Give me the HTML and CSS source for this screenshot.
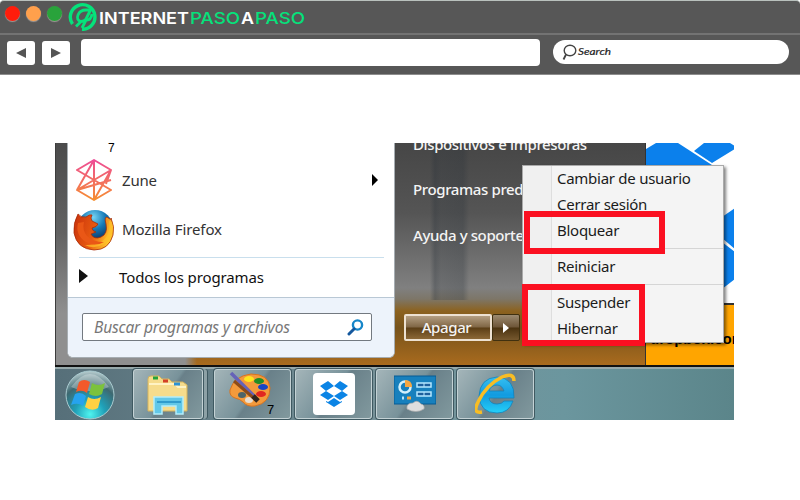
FILE: index.html
```html
<!DOCTYPE html>
<html lang="es">

<head>
    <meta charset="UTF-8">
    <meta name="viewport" content="width=device-width, initial-scale=1.0">
    <title>Internet Paso a Paso</title>
    <link rel="stylesheet" href="styles.css">
</head>

<body>
    <div class="browser">
        <div class="title-bar">
            <span class="dot red"></span>
            <span class="dot orange"></span>
            <span class="dot green"></span>
            <svg class="logo" width="240" height="30" viewBox="0 0 240 30">
                <g fill="none" stroke="#05e27b">
                    <path d="M4.500 23 A12.300 12.300 0 1 1 14 28.300" stroke-width="3.400" />
                    <path d="M8 25.500 L13 20.500 Q8 19 10 14 Q12 9 18 9 H22.500 L18 18 Q16.500 20.500 13 20.500" stroke-width="2.800" stroke-linejoin="round" />
                    <path d="M14 27 L18 19 Q23 19.500 24 13" stroke-width="2.800" />
                </g>
                <g class="logo-text">
                    <text x="31" y="22.500" fill="#fff" textLength="90" lengthAdjust="spacingAndGlyphs">INTERNET</text>
                    <text class="thin" x="122" y="22.500" fill="#05e27b" textLength="50" lengthAdjust="spacingAndGlyphs">PASO</text>
                    <text x="173" y="22.500" fill="#fff" textLength="13" lengthAdjust="spacingAndGlyphs">A</text>
                    <text class="thin" x="187" y="22.500" fill="#05e27b" textLength="50" lengthAdjust="spacingAndGlyphs">PASO</text>
                </g>
            </svg>
        </div>
        <div class="tool-bar">
            <div class="nav-button"><svg width="10" height="10"><path d="M0 5 L10 0 V10Z" fill="#555" /></svg></div>
            <div class="nav-button"><svg width="10" height="10"><path d="M10 5 L0 0 V10Z" fill="#555" /></svg></div>
            <div class="address"></div>
            <div class="search">
                <svg width="15" height="17" fill="none" stroke="#444" stroke-width="1.4"><ellipse cx="8" cy="6.5" rx="5.8" ry="5.3" /><path d="M4 10.5 L1.5 15.5" stroke-width="1.8" /></svg>
                <svg width="36" height="16"><text class="search-text" x="1" y="11" textLength="33" lengthAdjust="spacingAndGlyphs">Search</text></svg>
            </div>
        </div>
    </div>

    <div class="desktop">
        <div class="screen">
            <div class="start-menu">
                <div class="programs">
                    <div class="program-list">
                        <span class="seven">7</span>
                        <div class="program zune">
                            <svg width="40" height="42" viewBox="0 0 40 42">
                                <defs>
                                    <linearGradient id="zune" gradientUnits="userSpaceOnUse" x1="20" y1="0" x2="20" y2="42">
                                        <stop offset="0" stop-color="#ee4b98" />
                                        <stop offset="1" stop-color="#f68f2e" />
                                    </linearGradient>
                                </defs>
                                <path d="M20 1 L3 11 L37 31 L20 41 L3 31 L37 11 Z M20 1 V41 M20 1 L3 31 M37 11 L32 25 M20 1 L37 11 L20 41 M3 31 L37 21" fill="none" stroke="url(#zune)" stroke-width="2" stroke-linejoin="round" />
                            </svg>
                            <span>Zune</span>
                            <svg class="more" width="6" height="12"><path d="M0 0 L6 6 L0 12Z" fill="#000" /></svg>
                        </div>
                        <div class="program firefox">
                            <svg width="42" height="42" viewBox="0 0 42 42">
                                <defs>
                                    <radialGradient id="globe" cx=".45" cy=".2" r=".75">
                                        <stop offset="0" stop-color="#75d5f4" />
                                        <stop offset=".45" stop-color="#1678b5" />
                                        <stop offset="1" stop-color="#061c48" />
                                    </radialGradient>
                                    <linearGradient id="fox" x1="0" y1="0" x2="1" y2=".3">
                                        <stop offset="0" stop-color="#c8300c" />
                                        <stop offset=".6" stop-color="#e85a10" />
                                        <stop offset="1" stop-color="#ffc52a" />
                                    </linearGradient>
                                </defs>
                                <circle cx="22" cy="19" r="18" fill="url(#globe)" />
                                <path d="M5 5 Q8 9 13 8 Q17 5 19 6 Q17 9 19 12 L25 15 Q24 18 19 19 Q19 22 23 23 L18 25 Q21 31 28 28 Q35 25 33 15 Q31 8 34 8 Q39 12 38 9 Q42 18 40 26 Q36 41 21 41 Q4 40 1 24 Q0 14 5 5Z" fill="url(#fox)" stroke="#a82b08" stroke-width=".8" />
                                <path d="M39 13 Q42 28 31 35 Q21 41 12 36 Q28 37 34 27 Q37 21 36 12Z" fill="#ffc02a" opacity=".7" />
                                <path d="M5 14 Q2 26 13 33 Q22 38 31 33 Q20 33 14 27 Q9 21 11 13Z" fill="#ea5716" />
                            </svg>
                            <span>Mozilla Firefox</span>
                        </div>
                        <div class="all-programs">
                            <svg width="9" height="14"><path d="M0 0 L9 7 L0 14Z" fill="#111" /></svg>
                            <span>Todos los programas</span>
                        </div>
                    </div>
                    <div class="finder">
                        <div class="finder-input">
                            <span>Buscar programas y archivos</span>
                            <svg width="17" height="17" fill="none"><circle cx="10.500" cy="6" r="4.600" stroke="#1686c9" stroke-width="2.400" /><path d="M7 10 L2 15" stroke="#14579d" stroke-width="3" stroke-linecap="round" /></svg>
                        </div>
                    </div>
                </div>
                <div class="places">
                    <div class="place devices">Dispositivos e impresoras</div>
                    <div class="place">Programas pred</div>
                    <div class="place">Ayuda y soporte</div>
                    <div class="power">
                        <div class="shutdown">Apagar</div>
                        <div class="power-arrow"><svg width="6" height="10"><path d="M0 0 L6 5 L0 10Z" fill="#fff" /></svg></div>
                    </div>
                </div>
            </div>
            <div class="wallpaper">
                <svg width="89" height="160" viewBox="0 0 89 160">
                    <path d="M0 0 H89 V160 H0Z" fill="#fff" />
                    <path d="M10 0 H32 L66 22 V30 H10 L0 22 V6Z M58 0 H84 L89 3 V6 L66 20 L48 8Z" fill="#0b80ec" />
                    <path d="M89 65 L76 74 V95 L89 106Z M76 99 L89 109 V136 L76 146Z" fill="#0b80ec" />
                </svg>
                <div class="label">dropbox.com</div>
            </div>

            <div class="context-menu">
                <div class="item">Cambiar de usuario</div>
                <div class="item">Cerrar sesión</div>
                <div class="item">Bloquear</div>
                <hr>
                <div class="item">Reiniciar</div>
                <hr>
                <div class="item">Suspender</div>
                <div class="item">Hibernar</div>
            </div>
            <div class="mark mark-lock"></div>
            <div class="mark mark-sleep"></div>
        </div>

        <div class="taskbar">
            <div class="orb">
                <svg width="56" height="52" viewBox="0 0 56 52">
                    <defs>
                        <radialGradient id="orb" cx=".5" cy=".9" r=".9">
                            <stop offset="0" stop-color="#4ff4ef" />
                            <stop offset=".35" stop-color="#1fa0b8" />
                            <stop offset=".7" stop-color="#3d6870" />
                            <stop offset="1" stop-color="#b9cdd0" />
                        </radialGradient>
                    </defs>
                    <circle cx="28" cy="26" r="24" fill="url(#orb)" stroke="#a9cbd0" />
                    <path d="M9 18 Q28 -8 47 18 Q28 26 9 18Z" fill="#fff" opacity=".3" />
                    <path d="M17 13 Q22 9 28 13 L25 24 Q20 20 14 23Z" fill="#f3592b" />
                    <path d="M30 14 Q36 18 43 14 L40 25 Q34 29 27 25Z" fill="#7cc23c" />
                    <path d="M13 25 Q19 22 24 27 L21 37 Q16 33 9 36Z" fill="#26a3ee" />
                    <path d="M26 28 Q32 32 39 28 L36 39 Q30 43 23 38Z" fill="#ffd143" />
                </svg>
            </div>
            <div class="task stacked">
                <svg width="46" height="42" viewBox="0 0 46 42">
                    <path d="M3 6 Q3 3 6 3 H14 L17 6 H24 L27 9 H38 L42 12 V38 H3Z" fill="#f6dc8c" stroke="#d5b35c" />
                    <path d="M4 11 H30 L33 14 H41" fill="none" stroke="#fff3c4" stroke-width="2" />
                    <path d="M8 5h5" stroke="#24a33b" stroke-width="3" />
                    <path d="M18 8h5" stroke="#d34027" stroke-width="3" />
                    <path d="M29 11h6" stroke="#2a91d4" stroke-width="3" />
                    <path d="M9 24 H38 V41 H31 V33 H17 V41 H9Z" fill="#62c8e8" stroke="#b4edfa" stroke-width="1.500" />
                    <path d="M12 29 H36" stroke="#2f9ccd" stroke-width="2" />
                </svg>
            </div>
            <div class="task paint">
                <svg width="46" height="40" viewBox="0 0 46 40">
                    <path d="M3 19 Q7 5 24 3 Q42 3 43 17 Q43 32 28 35 Q20 36 16 31 Q13 28 8 27 Q2 25 3 19Z" fill="#f39a3c" stroke="#d77420" />
                    <ellipse cx="22" cy="8" rx="5" ry="3" fill="#ffe51e" />
                    <ellipse cx="32" cy="10" rx="5" ry="3" fill="#218d26" />
                    <ellipse cx="36" cy="16" rx="5" ry="3" fill="#1745c5" />
                    <ellipse cx="34" cy="23" rx="5" ry="3" fill="#e12620" />
                    <ellipse cx="15" cy="24" rx="4" ry="3" fill="#4d6469" />
                    <ellipse cx="22" cy="29" rx="4" ry="3" fill="#e8ddd0" />
                    <path d="M4 2 L28 26" stroke="#6663b8" stroke-width="3.500" />
                    <path d="M7 10 L29 29" stroke="#8b4b1a" stroke-width="3" />
                    <path d="M26 25 L31 30" stroke="#30251e" stroke-width="5" />
                </svg>
                <span class="badge">7</span>
            </div>
            <div class="task">
                <div class="dropbox">
                    <svg width="28" height="26" viewBox="0 0 28 26">
                        <path d="M8 0 L14 5 L6 10 L0 5Z M20 0 L28 5 L22 10 L14 5Z M0 14 L6 10 L14 15 L8 19Z M22 10 L28 14 L20 19 L14 15Z M6 20 L8 21 L14 17 L20 21 L22 20 V21 L14 26 L6 21Z" fill="#0b84e5" />
                    </svg>
                </div>
            </div>
            <div class="task">
                <svg width="42" height="38" viewBox="0 0 42 38">
                    <path d="M0 1 H42 V29 H0Z" fill="#1780bd" stroke="#075b93" />
                    <circle cx="11" cy="12" r="5.500" fill="none" stroke="#d2f0fc" stroke-width="2.500" />
                    <path d="M11 12 V5 Q18 5 18 12Z" fill="#f5a640" />
                    <path d="M23 8h14v4h-14zM23 17h14v4h-14z" fill="#1e609d" stroke="#b5e7ff" stroke-width="1.500" />
                    <path d="M30 8v4M30 17v4" stroke="#b5e7ff" />
                    <path d="M8 23h2" stroke="#b5e7ff" stroke-width="3" />
                    <path d="M13 23h4" stroke="#f5a640" stroke-width="3" />
                    <path d="M13 34 Q12 28 19 28 Q23 24 27 29 Q31 30 30 34 Q22 39 13 34Z" fill="#dedede" stroke="#aaa" stroke-width=".7" />
                </svg>
            </div>
            <div class="task">
                <svg width="42" height="42" viewBox="0 0 42 42">
                    <defs>
                        <linearGradient id="ie" x1="0" y1="0" x2="0" y2="1">
                            <stop offset="0" stop-color="#35bff0" />
                            <stop offset=".5" stop-color="#129be0" />
                            <stop offset="1" stop-color="#25d0f8" />
                        </linearGradient>
                    </defs>
                    <path d="M39 25 H14 Q15 31 22 31 Q27 31 29 28 H38 Q34 40 22 40 Q5 40 4 23 Q5 5 22 4 Q40 5 39 25Z M14 18 H29 Q27 12 22 12 Q16 12 14 18Z" fill="url(#ie)" fill-rule="evenodd" stroke="#1581b8" stroke-width=".8" />
                    <path d="M7 39 Q-3 41 3 29 Q11 12 27 4 Q39 -1 39 8" fill="none" stroke="#f8bd24" stroke-width="3.500" />
                </svg>
            </div>
        </div>
    </div>
</body>

</html>
```
FILE: styles.css
```css
* {
    box-sizing: border-box;
}

body {
    margin: 0;
    width: 800px;
    height: 500px;
    overflow: hidden;
    background-color: #fff;
    font-family: "Noto Sans", "Open Sans", sans-serif;
}

svg {
    display: block;
    flex: none;
}

.browser {
    height: 75px;
    background-color: #575757;
    border-top: 1px solid #b9c1bd;
    border-bottom: 1px solid #8d8d8d;
    border-radius: 4px 4px 0 0;
}

.title-bar {
    height: 32px;
    display: flex;
    align-items: flex-start;
    padding: 0 5px;
}

.dot {
    width: 15px;
    height: 15px;
    margin: 5px 6px 0 0;
    border-radius: 50%;
    box-shadow: 0 1px 1px #a09b98;
}

.red {
    background-color: #ff1d0b;
}

.orange {
    background-color: #ffa04c;
}

.green {
    background-color: #29a33b;
}

.logo-text {
    font-family: Inter, sans-serif;
    font-size: 16px;
    font-weight: 600;
}

.thin {
    font-weight: 500;
}

.tool-bar {
    height: 41px;
    display: flex;
    padding: 6px 11px 0 7px;
    border-top: 2px solid #737373;
}

.nav-button {
    width: 28px;
    height: 24px;
    margin: 0 7px 0 0;
    display: flex;
    align-items: center;
    justify-content: center;
    background-color: #fff;
    border-radius: 3px;
}

.address {
    width: 459px;
    height: 27px;
    margin: -2px 13px 0 4px;
    background-color: #fff;
    border-radius: 4px;
}

.search {
    flex: 1;
    height: 24px;
    display: flex;
    align-items: center;
    padding-left: 9px;
    margin-top: -1px;
    background-color: #fff;
    border-radius: 12px;
}

.search-text {
    font-family: Lato, sans-serif;
    font-size: 10px;
    font-style: italic;
    font-weight: 400;
    fill: #222;
    stroke: #222;
    stroke-width: .2px;
}

.desktop {
    width: 679px;
    height: 277px;
    margin: 68px 0 0 55px;
    overflow: hidden;
}

.screen {
    position: relative;
    height: 224px;
    display: flex;
    border-bottom: 2px solid #111;
}

.start-menu {
    width: 591px;
    display: flex;
    padding-left: 12px;
    background: linear-gradient(90deg, #3d3d3d 1px, transparent 1px),
        linear-gradient(90deg, #8f8f8f 130px, transparent 142px) 0 214px / 100% 8px no-repeat,
        linear-gradient(#4b4b4b, #626262 90px, #8f8f8f 170px, #8f8f8f) 0 0 / 14px 100% no-repeat,
        linear-gradient(90deg, transparent 375px, #28303855 380px, #28303833 386px, #28303844 408px, transparent 414px) 0 0 / 100% 157px no-repeat,
        linear-gradient(#464646 0, #555 70px, #808080 145px, #7d7668 156px, #8c621f 168px, #77531b 185px, #a96b1e 222px);
    border-right: 1px solid #333;
}

.programs {
    width: 328px;
    height: 215px;
    background-color: #fff;
    border: 1px solid #a6adb2;
    border-top: 0;
    border-radius: 0 0 6px 6px;
    overflow: hidden;
}

.program-list {
    height: 155px;
    border-bottom: 1px solid #b9c8d5;
    color: #333;
    font-size: 15px;
}

.seven {
    display: block;
    height: 14px;
    padding-left: 40px;
    color: #000;
    font-family: "Liberation Sans", Arial, sans-serif;
    font-size: 12px;
    line-height: 10px;
}

.program {
    display: flex;
    align-items: center;
}

.zune {
    height: 46px;
    padding-left: 6px;
    letter-spacing: -.2px;
}

.zune span {
    margin-left: 8px;
}

.more {
    margin: 0 16px 0 auto;
}

.firefox {
    height: 54px;
    padding-left: 5px;
    letter-spacing: -.1px;
}

.firefox span {
    margin: -2px 0 0 7px;
}

.all-programs {
    height: 41px;
    margin: 0 10px 0 11px;
    display: flex;
    align-items: center;
    border-top: 1px solid #c9dfed;
    color: #111;
}

.all-programs svg {
    margin-top: -4px;
}

.all-programs span {
    margin: -2px 0 0 31px;
    letter-spacing: -.12px;
}

.finder {
    height: 60px;
    padding: 15px 22px 0 14px;
    background-color: #edf3fb;
}

.finder-input {
    height: 28px;
    display: flex;
    align-items: center;
    justify-content: space-between;
    padding: 0 7px 0 11px;
    background-color: #fff;
    border: 1px solid #737980;
    border-radius: 2px;
    color: #777;
    font-size: 15.5px;
    font-style: italic;
    letter-spacing: -.15px;
    white-space: nowrap;
}

.places {
    width: 250px;
    padding-left: 18px;
    color: #f4f4f4;
    font-size: 15px;
    font-weight: 500;
    letter-spacing: -.38px;
    white-space: nowrap;
    overflow: hidden;
}

.place {
    height: 46px;
    line-height: 44px;
}

.devices {
    height: 24px;
    line-height: 2px;
}

.power {
    display: flex;
    height: 27px;
    margin: 55px 0 0 -9px;
}

.shutdown {
    width: 88px;
    padding-right: 3px;
    border: 2px solid #ede1d1;
    border-radius: 2px;
    background: linear-gradient(#b49f82, #806645 48%, #5b3e16 52%, #8c6837);
    line-height: 22px;
    text-align: center;
}

.power-arrow {
    width: 28px;
    display: flex;
    align-items: center;
    justify-content: center;
    background: linear-gradient(#9c8a70, #6e5638 48%, #4b3310 52%, #76582e);
    border: 1px solid #40300f;
    border-radius: 2px;
}

.wallpaper {
    width: 88px;
    overflow: hidden;
}

.label {
    height: 62px;
    padding-left: 4px;
    background-color: #ffa500;
    border-top: 2px solid #333;
    font-family: "Liberation Sans", Arial, sans-serif;
    font-size: 15px;
    font-weight: 700;
    line-height: 68px;
    white-space: nowrap;
}

.context-menu {
    position: absolute;
    left: 467px;
    top: 22px;
    width: 202px;
    height: 178px;
    background: linear-gradient(90deg, #f0f0f0 28px, #dedede 28px, #dedede 29px, #f4f4f4 29px);
    border: 1px solid #aaa;
    box-shadow: 2px 2px 3px rgba(0, 0, 0, 0.5);
    color: #1b1b1b;
    font-size: 15px;
    letter-spacing: -.27px;
}

.item {
    height: 26px;
    padding-left: 34px;
    line-height: 25px;
}

.context-menu hr {
    height: 1px;
    margin: 4px 0 5px 30px;
    border: 0;
    background-color: #d5d5d5;
}

.mark {
    position: absolute;
    border: 6px solid #fb1021;
}

.mark-lock {
    left: 469px;
    top: 68px;
    width: 141px;
    height: 43px;
}

.mark-sleep {
    left: 467px;
    top: 141px;
    width: 123px;
    height: 62px;
}

.taskbar {
    height: 53px;
    display: flex;
    background: linear-gradient(90deg, #566f79, #78939a 50%, #6b969e 75%, #5b858a);
    border-top: 2px solid #97a9ab;
}

.orb {
    width: 78px;
    padding-left: 7px;
}

.task {
    position: relative;
    width: 77px;
    height: 50px;
    margin-right: 4px;
    display: flex;
    align-items: center;
    justify-content: center;
    background: linear-gradient(125deg, #a4b5b9, #78929a 48%, #698089 52%, #81999e);
    border: 1px solid #c4d2d5;
    border-radius: 3px;
    box-shadow: 0 0 0 1px #3f5961;
}

.stacked {
    width: 70px;
    margin-right: 11px;
    box-shadow: 0 0 0 1px #3f5961, 4px 0 0 #8da1a6, 5px 0 0 #3f5961;
}

.paint {
    padding: 0 5px 6px 0;
}

.badge {
    position: absolute;
    left: 52px;
    top: 33px;
    font-family: "Liberation Sans", Arial, sans-serif;
    font-size: 13px;
    line-height: 14px;
}

.dropbox {
    width: 42px;
    height: 42px;
    display: flex;
    align-items: center;
    justify-content: center;
    background-color: #fff;
    border-radius: 4px;
}
```
